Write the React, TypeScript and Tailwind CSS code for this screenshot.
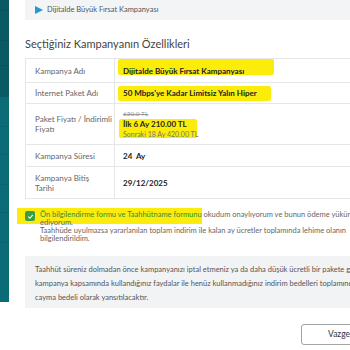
import React from 'react';

interface Row {
  label: React.ReactNode;
  value: React.ReactNode;
  height: string;
}

const Mark: React.FC<{ className: string }> = ({ className }) => (
  <span className={`absolute bg-[#fbec0c] rounded-[2px] ${className}`} />
);

const rows: Row[] = [
  {
    label: 'Kampanya Adı',
    height: 'h-[23px]',
    value: (
      <>
        <Mark className="left-[3px] top-[0px] w-[156px] h-[16px]" />
        <span className="relative font-bold text-[#222]">Dijitalde Büyük Fırsat Kampanyası</span>
      </>
    ),
  },
  {
    label: 'İnternet Paket Adı',
    height: 'h-[21px]',
    value: (
      <>
        <Mark className="left-[3px] top-[3px] w-[153px] h-[15px]" />
        <span className="relative font-bold text-[#222]">50 Mbps'ye Kadar Limitsiz Yalın Hiper</span>
      </>
    ),
  },
  {
    label: (
      <>
        Paket Fiyatı / İndirimli
        <br />
        Fiyatı
      </>
    ),
    height: 'h-[41px]',
    value: (
      <>
        <Mark className="left-[4px] top-[15px] w-[78px] h-[19px]" />
        <div className="relative flex flex-col">
          <span className="text-[6.5px] leading-[10px] text-[#999] line-through">630.0 TL</span>
          <span className="font-bold text-[#222] leading-[11px]">İlk 6 Ay 210.00 TL</span>
          <span className="text-[7px] leading-[9px] text-[#777]">Sonraki 18 Ay 420.00 TL</span>
        </div>
      </>
    ),
  },
  {
    label: 'Kampanya Süresi',
    height: 'h-[22px]',
    value: <span className="font-bold text-[#222] whitespace-pre">24  Ay</span>,
  },
  {
    label: (
      <>
        Kampanya Bitiş
        <br />
        Tarihi
      </>
    ),
    height: 'h-[32px]',
    value: <span className="font-bold text-[#222]">29/12/2025</span>,
  },
];

export default function App() {
  return (
    <div className="w-[350px] h-[350px] overflow-hidden bg-white flex font-['Lato',sans-serif]">
      {/* sidebar */}
      <div className="w-[9px] h-[302px] shrink-0 flex flex-col bg-[#0b6b76]">
        <div className="h-[97px] bg-[#0a5a64] flex flex-col">
          <div className="h-[11px] border-b border-[#09525b]" />
          <div className="h-[30px] border-b border-[#09525b]" />
          <div className="h-[25px] border-b border-[#09525b]" />
        </div>
        <div className="h-[30px] border-b border-[#0a6470]" />
        <div className="h-[28px] border-b border-[#0a6470]" />
        <div className="h-[30px] border-b border-[#0a6470]" />
        <div className="h-[28px] border-b border-[#0a6470]" />
        <div className="h-[30px] border-b border-[#0a6470]" />
      </div>

      <div className="ml-[16px] w-[380px] shrink-0 flex flex-col">
        {/* campaign strip */}
        <div className="h-[20px] bg-[#f3f4f6] flex items-center pl-[10px] gap-[4px]">
          <svg width="8" height="8" viewBox="0 0 8 8">
            <path d="M0 0 L8 4 L0 8 Z" fill="#1e9ad0" />
          </svg>
          <span className="text-[7.5px] text-[#555]">Dijitalde Büyük Fırsat Kampanyası</span>
        </div>

        <h2 className="mt-[16px] text-[11px] leading-[16px] text-[#444]">
          Seçtiğiniz Kampanyanın Özellikleri
        </h2>

        {/* details table */}
        <div className="mt-[6px] border border-[#e6e6e6] flex flex-col text-[8px]">
          {rows.map((r, i) => (
            <div key={i} className={`flex ${r.height} ${i > 0 ? 'border-t border-[#e6e6e6]' : ''}`}>
              <div className="w-[88px] shrink-0 pl-[9px] flex items-center text-[#666] leading-[10px]">
                <span>{r.label}</span>
              </div>
              <div className="relative flex-1 border-l border-[#e6e6e6] pl-[8px] flex items-center">
                {r.value}
              </div>
            </div>
          ))}
        </div>

        {/* agreement */}
        <div className="relative mt-[11px] flex text-[7.5px] leading-[8px]">
          <span className="absolute left-[-8px] top-[-2px] w-[185px] h-[16px] bg-[#fbec0c]" />
          <div className="relative w-[15px] shrink-0 pt-[1px]">
            <span className="w-[10px] h-[10px] rounded-[2px] bg-[#3a9e45] flex items-center justify-center">
              <svg width="7" height="7" viewBox="0 0 8 8">
                <path d="M1.5 4.2 L3.3 6 L6.6 2.2" stroke="white" strokeWidth="1.3" fill="none" />
              </svg>
            </span>
          </div>
          <p className="relative whitespace-nowrap text-[#666] pt-[1px]">
            <span className="text-[#2f8f38]">Ön bilgilendirme formu ve Taahhütname formunu</span> okudum
            onaylıyorum ve bunun ödeme yükümlülüğü doğurduğunu kabul
            <br />
            ediyorum.
            <br />
            Taahhüde uyulmazsa yararlanılan toplam indirim ile kalan ay ücretler toplamında lehime olanın
            <br />
            bilgilendirildim.
          </p>
        </div>

        {/* info box */}
        <div className="mt-[13px] bg-[#f2f3f5] pl-[10px] pt-[7px] pb-[3px] text-[7.5px] leading-[14px] text-[#555] whitespace-nowrap">
          Taahhüt süreniz dolmadan önce kampanyanızı iptal etmeniz ya da daha düşük ücretli bir pakete geçmeniz
          <br />
          kampanya kapsamında kullandığınız faydalar ile henüz kullanmadığınız indirim bedelleri toplamından
          <br />
          cayma bedeli olarak yansıtılacaktır.
        </div>

        <div className="mt-[16px] flex justify-end">
          <button className="w-[104px] h-[21px] border border-[#a3a3a3] rounded-[3px] text-[8.5px] text-[#333] text-left pl-[26px]">
            Vazgeç
          </button>
        </div>
      </div>
    </div>
  );
}
